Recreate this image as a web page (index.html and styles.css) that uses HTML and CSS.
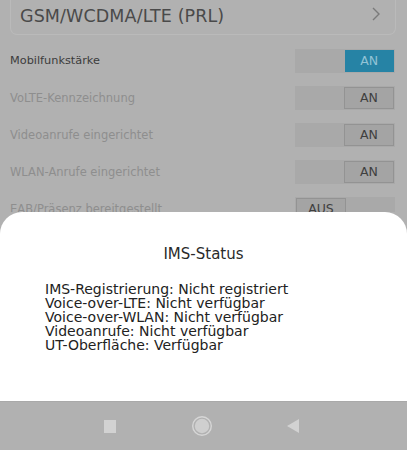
FILE: index.html
```html
<!DOCTYPE html>
<html>
<head>
<meta charset="utf-8">
<link rel="stylesheet" href="styles.css">
</head>
<body>
<div class="screen">
  <div class="settings">
    <div class="card">
      <span class="card-text">GSM/WCDMA/LTE (PRL)</span>
      <svg class="chev" width="10" height="16" viewBox="0 0 10 16"><path d="M2 2 L8 8 L2 14" fill="none" stroke="#7a7a7a" stroke-width="1.4"/></svg>
    </div>
    <div class="row">
      <span class="label active">Mobilfunkstärke</span>
      <div class="toggle"><span class="half"></span><span class="half on-blue">AN</span></div>
    </div>
    <div class="row">
      <span class="label">VoLTE-Kennzeichnung</span>
      <div class="toggle"><span class="half"></span><span class="half btn">AN</span></div>
    </div>
    <div class="row">
      <span class="label">Videoanrufe eingerichtet</span>
      <div class="toggle"><span class="half"></span><span class="half btn">AN</span></div>
    </div>
    <div class="row">
      <span class="label">WLAN-Anrufe eingerichtet</span>
      <div class="toggle"><span class="half"></span><span class="half btn">AN</span></div>
    </div>
    <div class="row">
      <span class="label">EAB/Präsenz bereitgestellt</span>
      <div class="toggle"><span class="half btn">AUS</span><span class="half"></span></div>
    </div>
  </div>
  <div class="dialog">
    <div class="title">IMS-Status</div>
    <div class="lines">
      <div>IMS-Registrierung: Nicht registriert</div>
      <div>Voice-over-LTE: Nicht verfügbar</div>
      <div>Voice-over-WLAN: Nicht verfügbar</div>
      <div>Videoanrufe: Nicht verfügbar</div>
      <div>UT-Oberfläche: Verfügbar</div>
    </div>
  </div>
  <div class="navbar">
    <span class="nav-square"></span>
    <svg class="nav-circle" width="22" height="22" viewBox="0 0 22 22"><circle cx="11" cy="11" r="9.3" fill="none" stroke="#d6d6d6" stroke-width="1.4"/><circle cx="11" cy="11" r="7.2" fill="#cfcfcf"/></svg>
    <svg class="nav-back" width="12" height="14" viewBox="0 0 12 14"><path d="M12 0 L12 14 L0 7 Z" fill="#d2d2d2"/></svg>
  </div>
</div>
</body>
</html>
```

FILE: styles.css
```css
* { box-sizing: border-box; }
html, body { margin: 0; padding: 0; }
body {
  width: 407px;
  height: 450px;
  overflow: hidden;
  background: #b1b1b1;
  font-family: "DejaVu Sans", "Noto Sans", sans-serif;
}
.screen {
  width: 407px;
  height: 450px;
  display: flex;
  flex-direction: column;
  overflow: hidden;
}
.settings {
  height: 212px;
  background: #b1b1b1;
  overflow: hidden;
  flex: none;
  padding: 0 13px 0 11px;
}
.card {
  margin-top: -20px;
  height: 55px;
  border: 1px solid #bababa;
  border-top: none;
  border-radius: 0 0 7px 7px;
  display: flex;
  align-items: flex-end;
  justify-content: space-between;
  padding: 0 14px 8px 9px;
  margin-left: -1px;
  margin-right: -2px;
}
.card-text {
  font-size: 17.5px;
  color: #4a4a4a;
  letter-spacing: 0.1px;
}
.chev { margin-bottom: 4px; }
.row {
  height: 37px;
  display: flex;
  align-items: center;
  justify-content: space-between;
}
.card + .row { margin-top: 7px; }
.label {
  font-size: 11.5px;
  color: #8e8e8e;
  margin-left: -1px;
}
.label.active { color: #3c3c3c; font-size: 11.3px; }
.toggle {
  width: 100px;
  height: 24px;
  background: #a9a9a9;
  display: flex;
  margin-right: -1px;
}
.half {
  flex: 1;
  display: flex;
  align-items: center;
  justify-content: center;
  font-size: 12.5px;
}
.on-blue {
  background: #2683a5;
  color: #92c3d6;
  margin: 1px 1px 1px 0;
}
.btn {
  background: #a4a4a4;
  border: 1px solid #939393;
  color: #3f3f3f;
  margin: 1px;
}
.dialog {
  flex: none;
  height: 189px;
  background: #ffffff;
  border-radius: 22px 22px 0 0;
}
.title {
  text-align: center;
  font-size: 15px;
  color: #2a2a2a;
  margin-top: 33px;
}
.lines {
  margin-top: 19px;
  padding-left: 45px;
  font-size: 14px;
  line-height: 14px;
  color: #222222;
}
.navbar {
  flex: none;
  height: 49px;
  background: #b1b1b1;
  border-top: 1px solid #a9a9a9;
  display: flex;
  align-items: center;
  padding-left: 104px;
}
.nav-square {
  width: 12px;
  height: 13px;
  background: #d2d2d2;
  margin-right: 75px;
}
.nav-circle { margin-right: 74px; }
```
